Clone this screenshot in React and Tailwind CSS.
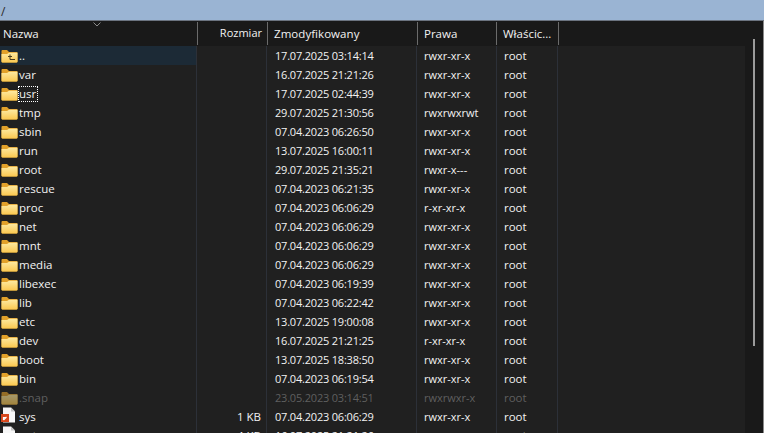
import React from 'react';

const rows = [
  ['var', '16.07.2025 21:21:26', 'rwxr-xr-x'],
  ['usr', '17.07.2025 02:44:39', 'rwxr-xr-x'],
  ['tmp', '29.07.2025 21:30:56', 'rwxrwxrwt'],
  ['sbin', '07.04.2023 06:26:50', 'rwxr-xr-x'],
  ['run', '13.07.2025 16:00:11', 'rwxr-xr-x'],
  ['root', '29.07.2025 21:35:21', 'rwxr-x---'],
  ['rescue', '07.04.2023 06:21:35', 'rwxr-xr-x'],
  ['proc', '07.04.2023 06:06:29', 'r-xr-xr-x'],
  ['net', '07.04.2023 06:06:29', 'rwxr-xr-x'],
  ['mnt', '07.04.2023 06:06:29', 'rwxr-xr-x'],
  ['media', '07.04.2023 06:06:29', 'rwxr-xr-x'],
  ['libexec', '07.04.2023 06:19:39', 'rwxr-xr-x'],
  ['lib', '07.04.2023 06:22:42', 'rwxr-xr-x'],
  ['etc', '13.07.2025 19:00:08', 'rwxr-xr-x'],
  ['dev', '16.07.2025 21:21:25', 'r-xr-xr-x'],
  ['boot', '13.07.2025 18:38:50', 'rwxr-xr-x'],
  ['bin', '07.04.2023 06:19:54', 'rwxr-xr-x'],
];

function FolderIcon({ up, dim }) {
  const id = up ? 'fold-up' : dim ? 'fold-dim' : 'fold';
  return (
    <svg width="17" height="14" viewBox="0 0 17 14" className={dim ? 'opacity-60' : ''}>
      <defs>
        <linearGradient id={id} x1="0" y1="0" x2="0" y2="1">
          <stop offset="0" stopColor="#fde9a0" />
          <stop offset="1" stopColor="#fbc850" />
        </linearGradient>
      </defs>
      <path d="M0.5 2 Q0.5 1 1.5 1 H6 L8 3 H16 Q16.5 3 16.5 4 V12.5 Q16.5 13.5 15.5 13.5 H1.5 Q0.5 13.5 0.5 12.5 Z" fill="#e2a12a" />
      <path d="M0.5 5 H6 L8 3.8 H16.5 V12.5 Q16.5 13.5 15.5 13.5 H1.5 Q0.5 13.5 0.5 12.5 Z" fill={`url(#${id})`} />
      {up && <path d="M9 5.5 V10.5 H14 M7 7.5 H11" fill="none" stroke="#4a3d1e" strokeWidth="1" />}
    </svg>
  );
}

function FileIcon({ link }) {
  return (
    <svg width="17" height="16" viewBox="0 0 17 16" className="-translate-y-[2px]">
      <path d="M2 0.5 H10 L14 4.5 V15.5 H2 Z" fill="#f7f7f7" />
      <path d="M10 0.5 V4.5 H14 Z" fill="#c4c4c4" />
      {link && <rect x="0" y="7" width="8" height="8" fill="#d8481c" />}
      {link && <path d="M2.5 13 V10.5 H5.5 M2.5 13 L5.5 10" fill="none" stroke="#fff" strokeWidth="1.2" />}
    </svg>
  );
}

// column widths for the rows; the header's separators sit one pixel further right
const bodyCols = 'grid grid-cols-[197px_70px_150px_80px_61px_187px]';
const headCols = 'grid grid-cols-[198px_70px_150px_79px_62px_186px]';

function Row({ icon, name, size, date, perms, owner = 'root', focused, active, dim }) {
  const text = dim ? 'text-[#5f5f5f]' : 'text-[#f2f2f2]';
  const cell = 'h-[19px] border-r border-[#2c3038] flex items-center';
  return (
    <div className={`${bodyCols} ${text}`}>
      <div className={`${cell} pl-[1px] ${active ? 'bg-[#1c2a36]' : ''}`}>
        <span className="w-[17px] flex justify-center shrink-0">{icon}</span>
        <span className={focused ? 'outline-1 outline-dotted outline-white -outline-offset-1 pl-[1px] pr-[2px] leading-[16px]' : 'pl-[1px]'}>{name}</span>
      </div>
      <div className={`${cell} justify-end pr-[5px]`}>{size}</div>
      <div className={`${cell} pl-[8px] pt-[1px] text-[11px] tracking-[-0.2px]`}>{date}</div>
      <div className={`${cell} pl-[7px] pt-[1px] text-[11px]`}>{perms}</div>
      <div className={`${cell} pl-[7px]`}>{owner}</div>
      <div />
    </div>
  );
}

function HeaderCell({ children, right }) {
  return (
    <div className={`h-[23px] mt-[1px] border-r border-[#6b6b6b] flex items-center ${right ? 'justify-end pl-[6px] pr-[5px]' : 'px-[6px]'}`}>
      {children}
    </div>
  );
}

export default function App() {
  return (
    <div className="w-[764px] h-[433px] overflow-hidden flex flex-col bg-[#191919] text-[11.5px] font-['Open_Sans','Noto_Sans',sans-serif]">
      {/* Path bar */}
      <div className="h-[21px] shrink-0 bg-[#9ab4d3] border-b border-[#6c7480] text-[#2a2a2a] text-[12px] leading-[24px] px-[1px]">/</div>

      <div className="flex-1 flex min-h-0 border-r border-[#8a8a8a]">
        <div className="w-[745px] shrink-0 flex flex-col">
          {/* Column headers */}
          <div className={`${headCols} relative h-[25px] shrink-0 text-[#f2f2f2] bg-[#191919]`}>
            <HeaderCell>
              <span className="-ml-[3px]">Nazwa</span>
            </HeaderCell>
            <HeaderCell right>
              <span className="text-[11px]">Rozmiar</span>
            </HeaderCell>
            <HeaderCell>
              <span className="text-[11.5px] tracking-[0.05px]">Zmodyfikowany</span>
            </HeaderCell>
            <HeaderCell>Prawa</HeaderCell>
            <HeaderCell>Właścic...</HeaderCell>
            <div />
            <svg width="8" height="5" viewBox="0 0 8 5" className="absolute left-[93px] top-[1px]">
              <path d="M0.5 0.5 L4 4 L7.5 0.5" fill="none" stroke="#8a8a8a" />
            </svg>
          </div>

          {/* Rows */}
          <div className="flex-1 min-h-0 overflow-hidden bg-[#202020]">
            <Row icon={<FolderIcon up />} name=".." date="17.07.2025 03:14:14" perms="rwxr-xr-x" active />
            {rows.map(([name, date, perms]) => (
              <Row key={name} icon={<FolderIcon />} name={name} date={date} perms={perms} focused={name === 'usr'} />
            ))}
            <Row icon={<FolderIcon dim />} name=".snap" date="23.05.2023 03:14:51" perms="rwxrwxr-x" dim />
            <Row icon={<FileIcon link />} name="sys" size="1 KB" date="07.04.2023 06:06:29" perms="rwxr-xr-x" />
            <Row icon={<FileIcon />} name="entropy" size="4 KB" date="16.07.2025 21:21:26" perms="rw-------" />
          </div>
        </div>

        {/* Scrollbar */}
        <div className="flex-1 pl-[8px] pt-[18px]">
          <div className="w-[2px] h-[307px] bg-[#9b9b9b]" />
        </div>
      </div>
    </div>
  );
}
